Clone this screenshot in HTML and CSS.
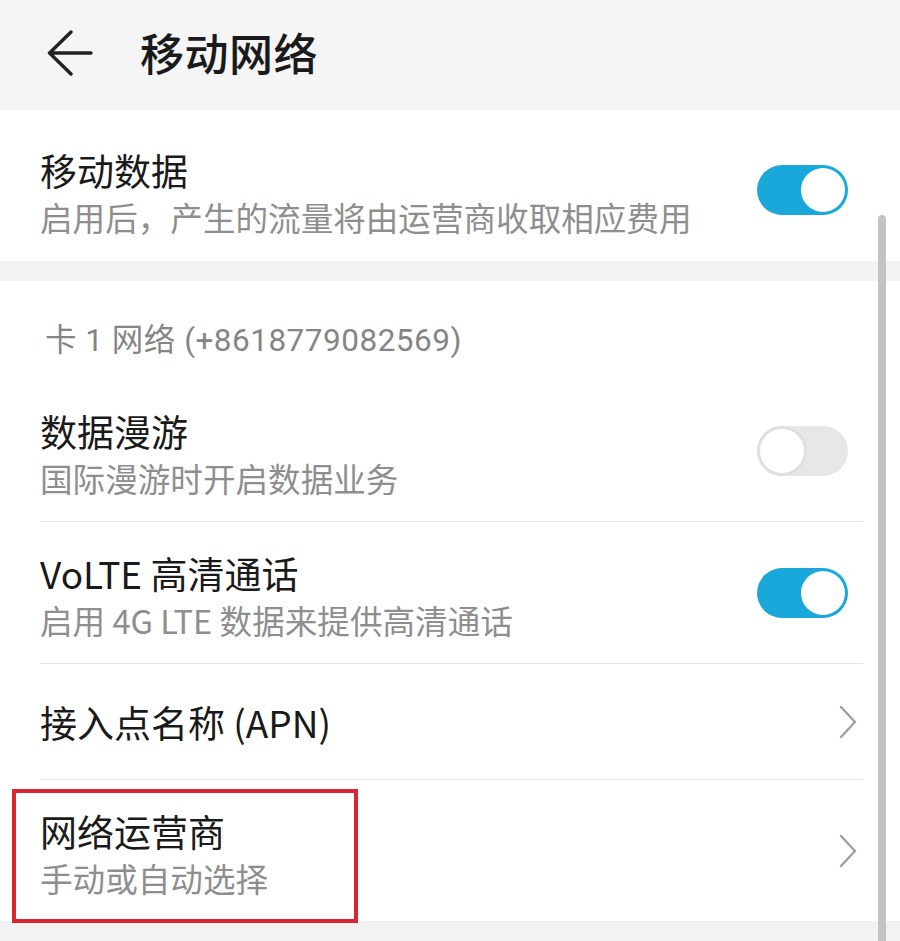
FILE: index.html
```html
<!DOCTYPE html>
<html lang="zh-CN">
<head>
<meta charset="utf-8">
<title>移动网络</title>
<link rel="stylesheet" href="styles.css">
</head>
<body>
<div class="screen">
  <header class="topbar">
    <svg class="back" width="46" height="46" viewBox="0 0 46 46" aria-hidden="true">
      <path d="M44 23 H3 M24 2 L2.5 23 L24 44" fill="none" stroke="#222" stroke-width="3.4" stroke-linecap="round" stroke-linejoin="round"/>
    </svg>
    <h1 class="page-title">移动网络</h1>
  </header>

  <section class="card card-top">
    <div class="row row-first">
      <div class="text">
        <div class="title">移动数据</div>
        <div class="sub">启用后，产生的流量将由运营商收取相应费用</div>
      </div>
      <span class="switch on"><span class="knob"></span></span>
    </div>
  </section>

  <section class="card card-main">
    <div class="section-label">卡 1 网络 (+8618779082569)</div>

    <div class="row two-line">
      <div class="text">
        <div class="title">数据漫游</div>
        <div class="sub">国际漫游时开启数据业务</div>
      </div>
      <span class="switch off"><span class="knob"></span></span>
    </div>

    <div class="row two-line">
      <div class="text">
        <div class="title">VoLTE 高清通话</div>
        <div class="sub">启用 4G LTE 数据来提供高清通话</div>
      </div>
      <span class="switch on"><span class="knob"></span></span>
    </div>

    <div class="row one-line">
      <div class="text">
        <div class="title">接入点名称 (APN)</div>
      </div>
      <svg class="chevron" width="20" height="34" viewBox="0 0 20 34" aria-hidden="true">
        <path d="M3 2 L17 17 L3 32" fill="none" stroke="#a0a0a0" stroke-width="2.4" stroke-linecap="round" stroke-linejoin="round"/>
      </svg>
    </div>

    <div class="row two-line last">
      <div class="text">
        <div class="title">网络运营商</div>
        <div class="sub">手动或自动选择</div>
      </div>
      <svg class="chevron" width="20" height="34" viewBox="0 0 20 34" aria-hidden="true">
        <path d="M3 2 L17 17 L3 32" fill="none" stroke="#a0a0a0" stroke-width="2.4" stroke-linecap="round" stroke-linejoin="round"/>
      </svg>
    </div>
  </section>

  <div class="scrollbar"></div>
  <div class="highlight"></div>
</div>
</body>
</html>
```

FILE: styles.css
```css
* { box-sizing: border-box; }

html, body {
  margin: 0;
  padding: 0;
  background: #f2f2f2;
}

body {
  font-family: "Noto Sans CJK SC", "Noto Sans", sans-serif;
  color: #1a1a1a;
}

.screen {
  position: relative;
  width: 900px;
  height: 941px;
  overflow: hidden;
  background: #f2f2f2;
}

/* ---------- top bar ---------- */
.topbar {
  height: 110px;
  display: flex;
  align-items: center;
  padding: 0 0 6px 47px;
  background: #f5f5f5;
}

.back {
  flex: none;
  margin-right: 47px;
  margin-top: 2px;
}

.page-title {
  margin: 0;
  font-size: 44px;
  line-height: 1;
  font-weight: 500;
  color: #1a1a1a;
  letter-spacing: 0.5px;
}

/* ---------- cards ---------- */
.card {
  background: #ffffff;
}

.card-top {
  height: 151px;
  padding: 0 37px 0 40px;
}

.card-main {
  margin-top: 20px;
  padding: 0 37px 0 40px;
}

.section-label {
  height: 99px;
  padding: 41px 0 0 5px;
  font-family: Roboto, "Noto Sans CJK SC", sans-serif;
  font-size: 31.5px;
  line-height: 38px;
  font-weight: 400;
  letter-spacing: 0.5px;
  color: #858585;
}

/* ---------- rows ---------- */
.row {
  display: flex;
  align-items: center;
  border-bottom: 1px solid #e4e4e4;
}

.row.last {
  border-bottom: none;
}

.row-first {
  height: 151px;
  border-bottom: none;
}

.row-first .text {
  padding-top: 36px;
}

.row-first .switch {
  margin-top: 8px;
}

.two-line {
  height: 142px;
}

.row.last.two-line {
  height: 141px;
}

.two-line .text {
  padding-top: 27px;
}

.one-line {
  height: 116px;
}

.text {
  flex: 1;
  align-self: flex-start;
  min-width: 0;
}

.one-line .text {
  align-self: center;
}

.title {
  font-size: 37px;
  line-height: 48px;
  color: #1a1a1a;
}

.sub {
  font-size: 32.6px;
  line-height: 46px;
  color: #8e8e8e;
}

/* ---------- switch ---------- */
.switch {
  flex: none;
  width: 91px;
  height: 50px;
  border-radius: 25px;
  padding: 3px;
  display: flex;
  margin-right: 15px;
}

.switch .knob {
  width: 44px;
  height: 44px;
  border-radius: 50%;
  background: #ffffff;
}

.switch.on {
  background: #1aa7da;
  justify-content: flex-end;
}

.switch.off {
  background: #e7e7e7;
  justify-content: flex-start;
}

.switch.off .knob {
  border: 3px solid #e0e0e0;
  width: 50px;
  height: 50px;
  margin: -3px;
}

/* ---------- chevron ---------- */
.chevron {
  flex: none;
  margin-right: 5px;
}

/* ---------- overlays ---------- */
.scrollbar {
  position: absolute;
  left: 878px;
  top: 215px;
  bottom: 0;
  width: 8px;
  border-radius: 4px 4px 0 0;
  background: #c3c3c3;
}

.highlight {
  position: absolute;
  left: 12px;
  top: 789px;
  width: 346px;
  height: 134px;
  border: 4px solid #db2530;
}
```
